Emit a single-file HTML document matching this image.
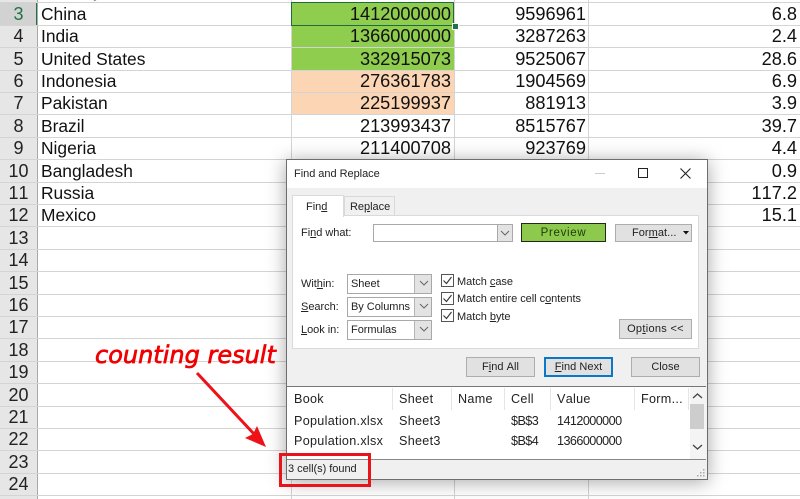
<!DOCTYPE html>
<html><head><meta charset="utf-8">
<style>
html,body{margin:0;padding:0}
#p{position:relative;width:800px;height:499px;overflow:hidden;background:#fff;font-family:"Liberation Sans",sans-serif;color:#111;font-kerning:none}
#p div,#p span.a{position:absolute;white-space:nowrap}
.h{left:0;width:37px;text-align:center;font-size:18px;height:22px;line-height:23px;color:#222}
.n{left:41px;font-size:17.4px;line-height:22px;height:22px}
.v{font-size:18.2px;line-height:22px;height:22px;text-align:right}
.b{left:250px;width:201px}
.c{left:400px;width:186px}
.d{left:600px;width:197px}
.l{left:0;width:800px;height:1px;background:#d4d4d4}
.t{font-size:11px;letter-spacing:-.03px;line-height:14px;color:#222}
.r{font-size:12.6px;letter-spacing:.3px;line-height:16px;color:#222}
.dg{letter-spacing:-.55px}
.btn{background:#e1e1e1;border:1px solid #adadad;box-sizing:border-box;text-align:center;font-size:11px;letter-spacing:.05px;color:#222}
.sel{background:#fff;border:1px solid #a8a8a8;box-sizing:border-box;width:85px;height:20px;left:347px;font-size:11px;letter-spacing:-.03px;line-height:18px;padding-left:3px;color:#222}
.ar{background:#e3e3e3;border-left:1px solid #b5b5b5;right:0;top:0;width:16px;height:18px}
.cb{left:441px;width:13px;height:13px;border:1px solid #555;background:#fff;box-sizing:border-box}
u{text-underline-offset:1px}
</style></head><body><div id="p">

<div style="left:0;top:0;width:37px;height:499px;background:#e6e6e6"></div>
<div style="left:0;top:3px;width:37px;height:22px;background:#d2d2d2"></div>
<div style="left:36px;top:3px;width:1px;height:22px;background:#217346"></div>
<div style="left:37px;top:0;width:1px;height:499px;background:#a9a9a9"></div>

<div style="left:292px;top:3px;width:162px;height:67px;background:#8fcd4e"></div>
<div style="left:292px;top:70px;width:162px;height:45px;background:#fcd5b4"></div>

<div class="l" style="top:2px"></div><div class="l" style="top:25px"></div><div class="l" style="top:47px"></div><div class="l" style="top:70px"></div><div class="l" style="top:92px"></div><div class="l" style="top:114px"></div><div class="l" style="top:137px"></div><div class="l" style="top:159px"></div><div class="l" style="top:182px"></div><div class="l" style="top:204px"></div><div class="l" style="top:226px"></div><div class="l" style="top:249px"></div><div class="l" style="top:271px"></div><div class="l" style="top:294px"></div><div class="l" style="top:316px"></div><div class="l" style="top:338px"></div><div class="l" style="top:361px"></div><div class="l" style="top:383px"></div><div class="l" style="top:406px"></div><div class="l" style="top:428px"></div><div class="l" style="top:450px"></div><div class="l" style="top:473px"></div><div class="l" style="top:495px"></div>

<div style="left:291px;top:0;width:1px;height:499px;background:#d4d4d4"></div>
<div style="left:454px;top:0;width:1px;height:499px;background:#d4d4d4"></div>
<div style="left:588px;top:0;width:1px;height:499px;background:#d4d4d4"></div>

<div class="h" style="top:3px;color:#217346">3</div><div class="h" style="top:25px">4</div><div class="h" style="top:48px">5</div><div class="h" style="top:70px">6</div><div class="h" style="top:92px">7</div><div class="h" style="top:115px">8</div><div class="h" style="top:137px">9</div><div class="h" style="top:160px">10</div><div class="h" style="top:182px">11</div><div class="h" style="top:204px">12</div><div class="h" style="top:227px">13</div><div class="h" style="top:249px">14</div><div class="h" style="top:272px">15</div><div class="h" style="top:294px">16</div><div class="h" style="top:316px">17</div><div class="h" style="top:339px">18</div><div class="h" style="top:361px">19</div><div class="h" style="top:384px">20</div><div class="h" style="top:406px">21</div><div class="h" style="top:428px">22</div><div class="h" style="top:451px">23</div><div class="h" style="top:473px">24</div>

<div class="n" style="top:-20px">Country</div><div class="n" style="top:3px">China</div><div class="n" style="top:25px">India</div><div class="n" style="top:48px">United States</div><div class="n" style="top:70px">Indonesia</div><div class="n" style="top:92px">Pakistan</div><div class="n" style="top:115px">Brazil</div><div class="n" style="top:137px">Nigeria</div><div class="n" style="top:160px">Bangladesh</div><div class="n" style="top:182px">Russia</div><div class="n" style="top:204px">Mexico</div>

<div class="v b" style="top:3px">1412000000</div><div class="v b" style="top:25px">1366000000</div><div class="v b" style="top:48px">332915073</div><div class="v b" style="top:70px">276361783</div><div class="v b" style="top:92px">225199937</div><div class="v b" style="top:115px">213993437</div><div class="v b" style="top:137px">211400708</div>

<div class="v c" style="top:3px">9596961</div><div class="v c" style="top:25px">3287263</div><div class="v c" style="top:48px">9525067</div><div class="v c" style="top:70px">1904569</div><div class="v c" style="top:92px">881913</div><div class="v c" style="top:115px">8515767</div><div class="v c" style="top:137px">923769</div>

<div class="v d" style="top:3px">6.8</div><div class="v d" style="top:25px">2.4</div><div class="v d" style="top:48px">28.6</div><div class="v d" style="top:70px">6.9</div><div class="v d" style="top:92px">3.9</div><div class="v d" style="top:115px">39.7</div><div class="v d" style="top:137px">4.4</div><div class="v d" style="top:160px">0.9</div><div class="v d" style="top:182px">117.2</div><div class="v d" style="top:204px">15.1</div>

<div style="left:291px;top:2px;width:163px;height:24px;border:1.5px solid #1f6b40;box-sizing:border-box"></div>
<div style="left:452px;top:23px;width:5px;height:5px;background:#217346;border:1px solid #fff"></div>

<!-- dialog -->
<div style="left:286px;top:159px;width:422px;height:321px;background:#f0f0f0;border:1px solid #6e6e6e;box-sizing:border-box;box-shadow:0 2px 18px rgba(0,0,0,.35)"></div>
<div style="left:287px;top:160px;width:420px;height:28px;background:#fff"></div>
<div class="t" style="left:294px;top:167px">Find and Replace</div>
<div style="left:595px;top:173px;width:10px;height:1px;background:#ccc"></div>
<div style="left:638px;top:168px;width:10px;height:10px;border:1.3px solid #222;box-sizing:border-box"></div>
<svg style="position:absolute;left:680px;top:168px" width="11" height="11" viewBox="0 0 11 11"><path d="M.5 .5L10.5 10.5M10.5 .5L.5 10.5" stroke="#222" stroke-width="1.1" fill="none"/></svg>

<!-- tab panel -->
<div style="left:292px;top:215px;width:407px;height:134px;background:#fff;border:1px solid #dadada;box-sizing:border-box"></div>
<div style="left:344px;top:196px;width:51px;height:20px;background:#f0f0f0;border:1px solid #d9d9d9;box-sizing:border-box"></div>
<div style="left:292px;top:195px;width:52px;height:22px;background:#fff;border:1px solid #dadada;border-bottom:none;box-sizing:border-box"></div>
<div class="t" style="left:306px;top:200px">Fin<u>d</u></div>
<div class="t" style="left:350px;top:200px">Re<u>p</u>lace</div>

<div class="t" style="left:301px;top:226px">Fi<u>n</u>d what:</div>
<div style="left:373px;top:224px;width:140px;height:18px;background:#fff;border:1px solid #a8a8a8;box-sizing:border-box"></div>
<div style="left:497px;top:224px;width:16px;height:18px;background:#e3e3e3;border:1px solid #a8a8a8;box-sizing:border-box"></div>
<svg style="position:absolute;left:500px;top:230px" width="10" height="7"><path d="M1 1L5 5L9 1" stroke="#666" fill="none"/></svg>

<div style="left:521px;top:223px;width:85px;height:19px;background:#8cc94c;border:1px solid #1f2b14;box-sizing:border-box;text-align:center;font-size:11.5px;letter-spacing:.7px;line-height:18px;color:#1f3a0a">Preview</div>
<div class="btn" style="left:615px;top:224px;width:77px;height:18px;line-height:16px;text-align:left;padding-left:16px">For<u>m</u>at...</div>
<svg style="position:absolute;left:683px;top:231px" width="7" height="5"><path d="M0 0H6L3 3.5Z" fill="#111"/></svg>

<div class="t" style="left:301px;top:277px">Wit<u>h</u>in:</div>
<div class="t" style="left:301px;top:300px"><u>S</u>earch:</div>
<div class="t" style="left:301px;top:323px"><u>L</u>ook in:</div>

<div class="sel" style="top:274px">Sheet<div class="ar"></div></div>
<div class="sel" style="top:297px">By Columns<div class="ar"></div></div>
<div class="sel" style="top:320px">Formulas<div class="ar"></div></div>
<svg style="position:absolute;left:419px;top:280px" width="10" height="60"><path d="M1 1L5 5L9 1M1 24L5 28L9 24M1 47L5 51L9 47" stroke="#666" fill="none"/></svg>

<div class="cb" style="top:274px"></div>
<div class="cb" style="top:292px"></div>
<div class="cb" style="top:309px"></div>
<svg style="position:absolute;left:441px;top:274px" width="13" height="50"><path d="M2.5 6.5L5.5 9.5L10.5 3M2.5 24.5L5.5 27.5L10.5 21M2.5 41.5L5.5 44.5L10.5 38" stroke="#333" stroke-width="1.1" fill="none"/></svg>
<div class="t" style="left:457px;top:275px">Match <u>c</u>ase</div>
<div class="t" style="left:457px;top:292px">Match entire cell c<u>o</u>ntents</div>
<div class="t" style="left:457px;top:310px">Match <u>b</u>yte</div>

<div class="btn" style="left:619px;top:319px;width:73px;height:20px;line-height:18px;letter-spacing:.3px">Op<u>t</u>ions &lt;&lt;</div>
<div class="btn" style="left:466px;top:357px;width:69px;height:20px;line-height:18px">F<u>i</u>nd All</div>
<div class="btn" style="left:544px;top:357px;width:69px;height:20px;line-height:16px;border:2px solid #0a78c8"><u>F</u>ind Next</div>
<div class="btn" style="left:631px;top:357px;width:69px;height:20px;line-height:18px">Close</div>

<!-- results -->
<div style="left:287px;top:386px;width:419px;height:74px;background:#fff;border-top:1px solid #777;border-bottom:1px solid #888;box-sizing:border-box;overflow:hidden"></div>
<div style="left:392px;top:388px;width:1px;height:22px;background:#e5e5e5"></div>
<div style="left:451px;top:388px;width:1px;height:22px;background:#e5e5e5"></div>
<div style="left:504px;top:388px;width:1px;height:22px;background:#e5e5e5"></div>
<div style="left:550px;top:388px;width:1px;height:22px;background:#e5e5e5"></div>
<div style="left:634px;top:388px;width:1px;height:22px;background:#e5e5e5"></div>
<div style="left:688px;top:388px;width:1px;height:22px;background:#e5e5e5"></div>

<div class="r" style="left:294px;top:391px">Book</div>
<div class="r" style="left:399px;top:391px">Sheet</div>
<div class="r" style="left:458px;top:391px">Name</div>
<div class="r" style="left:511px;top:391px">Cell</div>
<div class="r" style="left:557px;top:391px">Value</div>
<div class="r" style="left:641px;top:391px">Form...</div>

<div class="r" style="left:294px;top:413px">Population.xlsx</div>
<div class="r" style="left:399px;top:413px">Sheet3</div>
<div class="r dg" style="left:511px;top:413px">$B$3</div>
<div class="r dg" style="left:557px;top:413px">1412000000</div>
<div class="r" style="left:294px;top:433px">Population.xlsx</div>
<div class="r" style="left:399px;top:433px">Sheet3</div>
<div class="r dg" style="left:511px;top:433px">$B$4</div>
<div class="r dg" style="left:557px;top:433px">1366000000</div>

<div style="left:690px;top:387px;width:16px;height:72px;background:#f4f4f4"></div>
<div style="left:690px;top:404px;width:14px;height:25px;background:#cdcdcd"></div>
<svg style="position:absolute;left:692px;top:393px" width="11" height="60"><path d="M1 5L5.5 1L10 5M1 52L5.5 56L10 52" stroke="#444" stroke-width="1.3" fill="none"/></svg>

<div class="t" style="left:288px;top:462px">3 cell(s) found</div>
<svg style="position:absolute;left:696px;top:468px" width="10" height="10"><path d="M7 1h1.5v1.5H7zM4 4h1.5v1.5H4zM7 4h1.5v1.5H7zM1 7h1.5v1.5H1zM4 7h1.5v1.5H4zM7 7h1.5v1.5H7z" fill="#aaa"/></svg>

<!-- annotation -->
<div style="left:95px;top:339px;font-size:24px;font-style:italic;color:#f00000;-webkit-text-stroke:.7px #f00000;line-height:32px;font-family:'DejaVu Sans',sans-serif">counting result</div>
<div style="left:279px;top:453px;width:92px;height:34px;border:3px solid #e8141c;box-sizing:border-box"></div>
<svg style="position:absolute;left:190px;top:368px" width="85" height="85"><path d="M7 5L64 66" stroke="#ee1118" stroke-width="3" fill="none"/><path d="M76 79L55 70L63 66L67 58Z" fill="#ee1118"/></svg>

</div></body></html>
